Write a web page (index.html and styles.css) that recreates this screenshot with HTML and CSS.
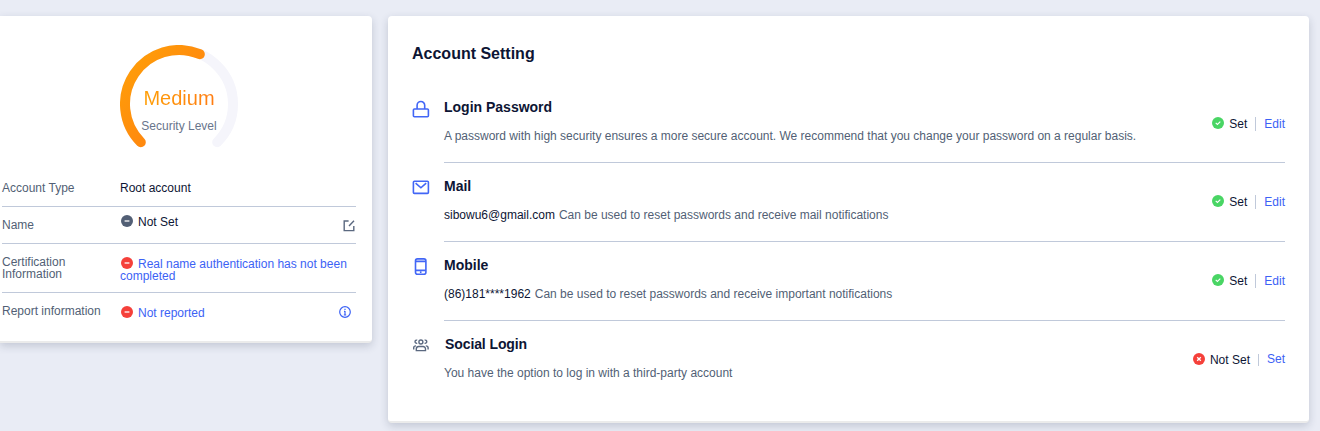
FILE: index.html
```html
<!DOCTYPE html>
<html lang="en">
<head>
  <meta charset="UTF-8" />
  <meta name="viewport" content="width=device-width, initial-scale=1.0"/>
  <title>Account Setting</title>
  <link rel="stylesheet" href="styles.css">
</head>
<body>
  <!-- Shared icons -->
  <svg class="sprite" width="0" height="0">
    <symbol id="minus" viewBox="0 0 12 12">
      <circle cx="6" cy="6" r="6" fill="currentColor"/>
      <path d="M3.6 6h4.8" stroke="#fff" stroke-width="1.3"/>
    </symbol>
    <symbol id="check" viewBox="0 0 12 12">
      <circle cx="6" cy="6" r="6" fill="currentColor"/>
      <path d="M3.7 5.8l1.7 1.6 2.9-2.8" fill="none" stroke="#fff" stroke-width="1.1"/>
    </symbol>
    <symbol id="cross" viewBox="0 0 12 12">
      <circle cx="6" cy="6" r="6" fill="currentColor"/>
      <path d="M4.2 4.2l3.6 3.6M7.8 4.2L4.2 7.8" stroke="#fff" stroke-width="1.3"/>
    </symbol>
  </svg>

  <main class="page">
    <!-- Security level and profile -->
    <section class="card profile">
      <div class="gauge">
        <svg width="118" height="118" viewBox="0 0 118 118" fill="none" stroke-width="10" stroke-linecap="round">
          <defs>
            <linearGradient id="level" x1="0" y1="0" x2="1" y2="1">
              <stop offset="0" stop-color="#ffa008"/>
              <stop offset="1" stop-color="#ff7c12"/>
            </linearGradient>
          </defs>
          <path d="M20.8 97.2A54 54 0 1 1 97.2 97.2" stroke="#f5f5fb"/>
          <path d="M20.8 97.2A54 54 0 0 1 79.8 9.2" stroke="url(#level)"/>
        </svg>
        <div class="gauge-text">
          <p class="level">Medium</p>
          <p class="level-label">Security Level</p>
        </div>
      </div>
      <dl class="info">
        <div class="row row-type">
          <dt>Account Type</dt>
          <dd>Root account</dd>
        </div>
        <div class="row row-name">
          <dt>Name</dt>
          <dd><svg class="dot gray"><use href="#minus"/></svg>Not Set</dd>
          <svg class="edit-icon" width="12" height="12" viewBox="0 0 12 12" fill="none" stroke="#5b6980" stroke-width="1.4">
            <path d="M5.6 1H1.2v9.6h9.6V6M6 6L11 .8"/>
          </svg>
        </div>
        <div class="row row-cert">
          <dt>Certification Information</dt>
          <dd><svg class="dot red"><use href="#minus"/></svg><a href="#">Real name authentication has not been completed</a></dd>
        </div>
        <div class="row row-report">
          <dt>Report information</dt>
          <dd><svg class="dot red"><use href="#minus"/></svg><a href="#">Not reported</a></dd>
          <svg class="info-icon" width="12" height="12" viewBox="0 0 12 12" fill="none" stroke="#3c62f5" stroke-width="1.2">
            <circle cx="6" cy="6" r="5.3"/>
            <path d="M6 5v4M6 2.8v1.3M5 5.3h1M4.8 9h2.4"/>
          </svg>
        </div>
      </dl>
    </section>

    <!-- Account settings -->
    <section class="card settings">
      <h1>Account Setting</h1>

      <div class="item">
        <svg class="item-icon" width="18" height="18" viewBox="0 0 18 18" fill="none" stroke="#4266f6" stroke-width="1.6">
          <rect x="1.4" y="9" width="15" height="7.8" rx="1"/>
          <path d="M5.1 9V5.3a3.8 3.8 0 0 1 7.6 0V9"/>
        </svg>
        <div class="item-body">
          <div>
            <h2>Login Password</h2>
            <p>A password with high security ensures a more secure account. We recommend that you change your password on a regular basis.</p>
          </div>
          <div class="status status-low">
            <svg class="dot green"><use href="#check"/></svg><span>Set</span><i></i><a href="#">Edit</a>
          </div>
        </div>
      </div>

      <div class="item">
        <svg class="item-icon" width="18" height="18" viewBox="0 0 18 18" fill="none" stroke="#4266f6" stroke-width="1.6">
          <rect x="1.4" y="2.2" width="15" height="12.2" rx="1"/>
          <path d="M3.6 4.2l5.3 4.6 5.3-4.6"/>
        </svg>
        <div class="item-body">
          <div>
            <h2>Mail</h2>
            <p><b>sibowu6@gmail.com</b>Can be used to reset passwords and receive mail notifications</p>
          </div>
          <div class="status">
            <svg class="dot green"><use href="#check"/></svg><span>Set</span><i></i><a href="#">Edit</a>
          </div>
        </div>
      </div>

      <div class="item">
        <svg class="item-icon" width="18" height="18" viewBox="0 0 18 18" fill="none" stroke="#4266f6" stroke-width="1.6">
          <rect x="3.5" y=".9" width="10.4" height="15.4" rx="2"/>
          <path d="M3.5 3.4h10.4M3.5 12.4h10.4M8.7 13.4v1.6"/>
        </svg>
        <div class="item-body">
          <div>
            <h2>Mobile</h2>
            <p><b>(86)181****1962</b>Can be used to reset passwords and receive important notifications</p>
          </div>
          <div class="status">
            <svg class="dot green"><use href="#check"/></svg><span>Set</span><i></i><a href="#">Edit</a>
          </div>
        </div>
      </div>

      <div class="item">
        <svg class="item-icon" width="18" height="18" viewBox="0 0 18 18" fill="none" stroke="#5b6980" stroke-width="1.4">
          <circle cx="8.9" cy="5" r="2"/>
          <path d="M5.2 3.2a1.6 1.6 0 1 0 0 3M12.6 3.2a1.6 1.6 0 1 1 0 3"/>
          <path d="M4.3 13.6v-1.7a2.4 2.4 0 0 1 2.4-2.4h4.4a2.4 2.4 0 0 1 2.4 2.4v1.7z"/>
          <path d="M1.7 12.4v-1.6c0-1.2.8-1.9 2.3-1.9M16.1 12.4v-1.6c0-1.2-.8-1.9-2.3-1.9"/>
        </svg>
        <div class="item-body">
          <div>
            <h2 class="shift">Social Login</h2>
            <p>You have the option to log in with a third-party account</p>
          </div>
          <div class="status status-unset">
            <svg class="dot red"><use href="#cross"/></svg><span>Not Set</span><i></i><a href="#">Set</a>
          </div>
        </div>
      </div>
    </section>
  </main>
</body>
</html>
```
FILE: styles.css
```css
/* Basic Reset */
* {
  margin: 0;
  padding: 0;
  box-sizing: border-box;
}

body {
  min-height: 100vh;
  background: #e9ecf5;
  color: #0d1534;
  font-family: "Liberation Sans", Arial, sans-serif;
  font-size: 12px;
}

a {
  color: #3c62f5;
  text-decoration: none;
}

.sprite {
  display: block;
}

.page {
  display: flex;
  align-items: flex-start;
  gap: 16px;
  padding: 16px 11px 0 0;
}

.card {
  background: #fff;
  border-bottom: 2px solid #ebebeb;
  border-radius: 4px;
  box-shadow: 0 3px 8px rgba(40, 50, 80, 0.2);
}

/* Profile card */
.profile {
  flex: none;
  width: 372px;
  height: 327px;
  padding: 29px 16px 0 2px;
  border-radius: 0 4px 4px 0;
}

.gauge {
  display: grid;
  width: 118px;
  height: 118px;
  margin: 0 auto;
}

.gauge > * {
  grid-area: 1 / 1;
}

.gauge-text {
  padding-top: 41px;
  text-align: center;
}

.level {
  font-size: 20px;
  line-height: 24px;
  background: linear-gradient(90deg, #ffa008, #ff7c12);
  -webkit-background-clip: text;
  background-clip: text;
  color: transparent;
  width: 72px;
  margin: 0 auto;
}

.level-label {
  margin-top: 8px;
  line-height: 16px;
  color: #69758c;
}

.row {
  display: flex;
  border-bottom: 1px solid #c0c9da;
  line-height: 12px;
}

.row dt {
  width: 118px;
  padding-right: 10px;
  color: #525f75;
}

.row dd {
  width: 236px;
}

.row dd .dot {
  margin: 0 5px 0 1px;
}

.row-type {
  height: 44px;
  padding-top: 19px;
}

.row-name {
  height: 37px;
  padding-top: 8px;
}

.row-name dt {
  padding-top: 4px;
}

.row-name dd {
  width: 223px;
}

.row-cert {
  height: 49px;
  padding-top: 12px;
}

.row-cert dd {
  padding-top: 1px;
}

.row-report {
  padding-top: 12px;
  border-bottom: 0;
}

.row-report dd {
  width: 219px;
  padding-top: 1px;
}

.edit-icon {
  margin-top: 5px;
}

.info-icon {
  margin-top: 1px;
}

/* Status dots */
.dot {
  width: 12px;
  height: 12px;
  vertical-align: -1px;
}

.gray {
  color: #525f75;
}

.red {
  color: #f5403a;
}

.green {
  color: #49d564;
}

/* Settings card */
.settings {
  flex: 1;
  height: 407px;
  padding: 24px 24px 0;
}

.settings h1 {
  height: 44px;
  font-size: 16px;
  line-height: 27px;
}

.item {
  display: flex;
  height: 79px;
}

.item-icon {
  flex: none;
  margin: 16px 14px 0 0;
}

.item-body {
  flex: 1;
  display: flex;
  justify-content: space-between;
  border-bottom: 1px solid #c0c9da;
}

.item:last-child .item-body {
  border-bottom: 0;
}

.item h2 {
  padding-top: 13px;
  font-size: 14px;
  line-height: 20px;
}

.item h2.shift {
  padding-left: 1px;
  letter-spacing: -0.1px;
}

.item p {
  margin-top: 10px;
  line-height: 18px;
  color: #525f75;
}

.item p b {
  margin-right: 4px;
  font-weight: normal;
  color: #0d1534;
}

.status {
  display: flex;
  align-items: center;
  height: 14px;
  margin-top: 32px;
}

.status-low {
  margin-top: 33px;
}

.status .dot {
  margin-bottom: 2px;
}

.status span {
  margin-left: 5px;
}

.status i {
  width: 1px;
  height: 14px;
  margin: 0 8px;
  background: #c0c9da;
}

.status-unset i {
  height: 12px;
}

.status-unset a {
  padding-bottom: 2px;
}
```
